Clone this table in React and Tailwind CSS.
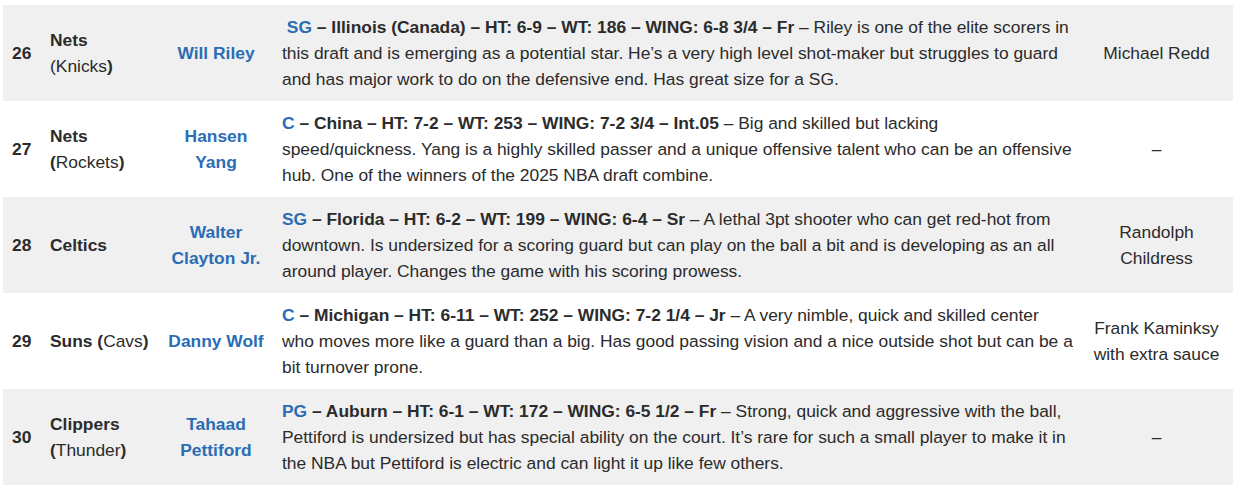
const BLUE = "text-[#2a6db4]";

const rows = [
  {
    no: 26,
    team: (
      <>
        <b>Nets</b>
        <br />
        (Knicks<b>)</b>
      </>
    ),
    player: ["Will Riley"],
    pos: "SG",
    lead: true,
    info: "Illinois (Canada) – HT: 6-9 – WT: 186 – WING: 6-8 3/4 – Fr",
    lines: [
      " – Riley is one of the elite scorers in",
      "this draft and is emerging as a potential star. He’s a very high level shot-maker but struggles to guard",
      "and has major work to do on the defensive end. Has great size for a SG.",
    ],
    comp: ["Michael Redd"],
  },
  {
    no: 27,
    team: (
      <>
        <b>Nets</b>
        <br />
        <b>(</b>Rockets<b>)</b>
      </>
    ),
    player: ["Hansen", "Yang"],
    pos: "C",
    info: "China – HT: 7-2 – WT: 253 – WING: 7-2 3/4 – Int.05",
    lines: [
      " – Big and skilled but lacking",
      "speed/quickness. Yang is a highly skilled passer and a unique offensive talent who can be an offensive",
      "hub. One of the winners of the 2025 NBA draft combine.",
    ],
    comp: ["–"],
  },
  {
    no: 28,
    team: <b>Celtics</b>,
    player: ["Walter", "Clayton Jr."],
    pos: "SG",
    info: "Florida – HT: 6-2 – WT: 199 – WING: 6-4 – Sr",
    lines: [
      " – A lethal 3pt shooter who can get red-hot from",
      "downtown. Is undersized for a scoring guard but can play on the ball a bit and is developing as an all",
      "around player. Changes the game with his scoring prowess.",
    ],
    comp: ["Randolph", "Childress"],
  },
  {
    no: 29,
    team: (
      <>
        <b>Suns (</b>Cavs<b>)</b>
      </>
    ),
    player: ["Danny Wolf"],
    pos: "C",
    info: "Michigan – HT: 6-11 – WT: 252 – WING: 7-2 1/4 – Jr",
    lines: [
      " – A very nimble, quick and skilled center",
      "who moves more like a guard than a big. Has good passing vision and a nice outside shot but can be a",
      "bit turnover prone.",
    ],
    comp: ["Frank Kaminksy", "with extra sauce"],
  },
  {
    no: 30,
    team: (
      <>
        <b>Clippers</b>
        <br />
        <b>(</b>Thunder<b>)</b>
      </>
    ),
    player: ["Tahaad", "Pettiford"],
    pos: "PG",
    info: "Auburn – HT: 6-1 – WT: 172 – WING: 6-5 1/2 – Fr",
    lines: [
      " – Strong, quick and aggressive with the ball,",
      "Pettiford is undersized but has special ability on the court. It’s rare for such a small player to make it in",
      "the NBA but Pettiford is electric and can light it up like few others.",
    ],
    comp: ["–"],
  },
];

const withBreaks = (parts) =>
  parts.map((p, i) => (
    <span key={i}>
      {i > 0 && <br />}
      {p}
    </span>
  ));

export default function App() {
  return (
    <div className="bg-white w-[1242px] h-[494px] pt-[5px] pl-[3px] font-['Liberation_Sans',Arial,sans-serif] text-[17.4px] leading-[26px] text-[#2b2b2b]">
      <table className="table-fixed border-collapse w-[1230px]">
        <colgroup>
          <col className="w-[38px]" />
          <col className="w-[119px]" />
          <col className="w-[112px]" />
          <col className="w-[808px]" />
          <col className="w-[153px]" />
        </colgroup>
        <tbody>
          {rows.map((r, i) => (
            <tr key={r.no} className={i % 2 === 0 ? "bg-[#f0f0f0]" : "bg-white"}>
              <td className="h-[96px] pl-[9px] align-middle font-bold">{r.no}</td>
              <td className="pl-[9px] align-middle">{r.team}</td>
              <td className={`px-[4px] align-middle text-center font-bold ${BLUE}`}>
                {withBreaks(r.player)}
              </td>
              <td className="pl-[10px] py-[9px] align-middle whitespace-nowrap">
                {r.lead && "\u00a0"}
                <b className={BLUE}>{r.pos}</b>
                <b> – {r.info}</b>
                {withBreaks(r.lines)}
              </td>
              <td className="px-[4px] align-middle text-center">{withBreaks(r.comp)}</td>
            </tr>
          ))}
        </tbody>
      </table>
    </div>
  );
}
